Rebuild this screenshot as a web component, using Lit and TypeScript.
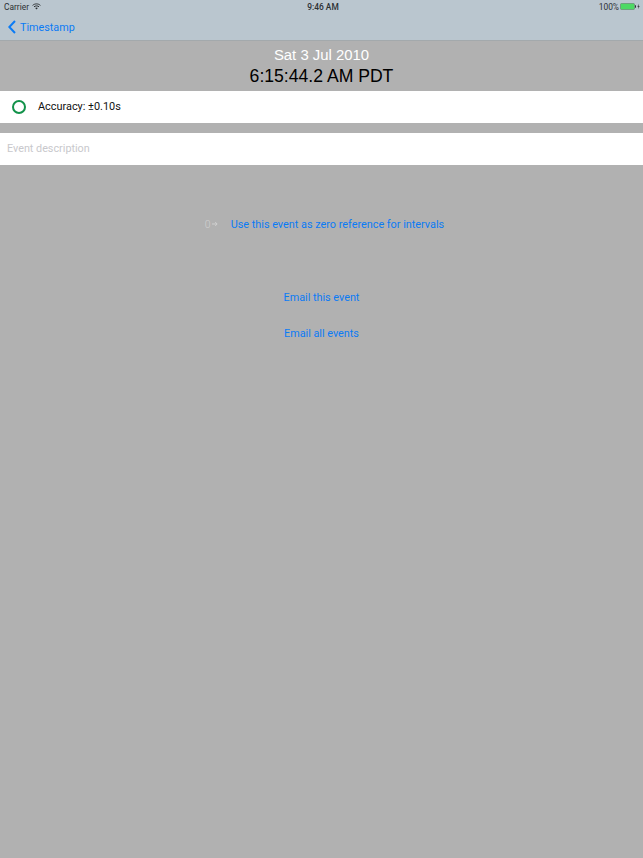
import { LitElement, html, css } from "lit";
import { customElement } from "lit/decorators.js";

@customElement("app-root")
export class AppRoot extends LitElement {
  static styles = css`
    :host { display: block; width: 643px; height: 858px; background: #b1b1b1; font-family: "Roboto", "Liberation Sans", sans-serif; overflow: hidden; }
    .top { height: 40px; background: #bac6cf; border-bottom: 1px solid #a3a9ac; display: flex; flex-direction: column; }
    .status { height: 13px; display: grid; grid-template-columns: 1fr auto 1fr; align-items: center; font-size: 8.4px; color: #2c3033; padding: 0 3px 0 4px; }
    .status .l { display: flex; align-items: center; gap: 3px; }
    .status .r { display: flex; align-items: center; justify-content: flex-end; gap: 1px; }
    .status .c { font-weight: 500; padding-left: 2px; }
    .nav { flex: 1; display: flex; align-items: center; gap: 4px; padding: 1px 0 0 8px; color: #0b7bf5; font-size: 10.8px; }
    .stamp { height: 50px; display: flex; flex-direction: column; align-items: center; padding-top: 4.5px; box-sizing: border-box; font-family: "Liberation Sans", sans-serif; }
    .date { color: #fff; font-size: 14.9px; line-height: 18px; }
    .time { color: #000; font-size: 17.6px; line-height: 24px; }
    .acc { height: 32px; background: #fff; display: flex; align-items: center; gap: 12px; padding: 0 12px 1px; font-size: 10.9px; color: #111; box-sizing: border-box; }
    .ring { width: 14px; height: 14px; border: 2.6px solid #12924a; border-radius: 50%; box-sizing: border-box; }
    .desc { margin-top: 10px; height: 32px; background: #fff; display: flex; align-items: center; padding: 0 7px 2px; font-size: 10.8px; color: #c8c8cc; box-sizing: border-box; }
    .zero { margin-top: 50px; height: 18px; display: flex; justify-content: center; align-items: center; gap: 13px; color: #0b7bf5; font-size: 10.85px; padding-left: 6px; }
    .zero .g { color: #d0d0d0; font-size: 10.5px; font-weight: 300; display: flex; align-items: center; gap: 1px; }
    .link { display: flex; justify-content: center; align-items: center; height: 18px; color: #0b7bf5; font-size: 10.8px; }
    .l1 { margin-top: 55px; }
    .l2 { margin-top: 18px; }
  `;
  render() {
    return html`
      <div class="top">
        <div class="status">
          <div class="l">Carrier
            <svg width="9" height="7" viewBox="0 0 9 7"><path d="M.6 2.4C2.8.4 6.2.4 8.4 2.4M2 3.8C3.4 2.6 5.6 2.6 7 3.8" fill="none" stroke="#2c3033" stroke-width="1"/><path d="M3.2 5 4.5 6.6 5.8 5C5 4.3 4 4.3 3.2 5Z" fill="#2c3033"/></svg>
          </div>
          <div class="c">9:46 AM</div>
          <div class="r">100%
            <svg width="20" height="7" viewBox="0 0 20 7"><rect x="0.5" y="0.5" width="14" height="6" rx="1" fill="#4cd964" stroke="#5f7f6a" stroke-width=".6"/><rect x="15" y="2.3" width="1" height="2.4" fill="#2c3033"/><path d="M18.8 0.8 17.4 3.8H18.5L18 6.2 19.6 3H18.5Z" fill="#2c3033"/></svg>
          </div>
        </div>
        <div class="nav">
          <svg width="8" height="14" viewBox="0 0 8 14"><path d="M7 1 1.3 7 7 13" fill="none" stroke="#0b7bf5" stroke-width="2"/></svg>
          <span>Timestamp</span>
        </div>
      </div>
      <div class="stamp">
        <div class="date">Sat 3 Jul 2010</div>
        <div class="time">6:15:44.2 AM PDT</div>
      </div>
      <div class="acc"><div class="ring"></div><span>Accuracy: ±0.10s</span></div>
      <div class="desc">Event description</div>
      <div class="zero"><span class="g">0<svg width="6" height="6" viewBox="0 0 6 6"><path d="M0 3H5M3.2 1.2 5.2 3 3.2 4.8" fill="none" stroke="#d0d0d0" stroke-width="1"/></svg></span><span>Use this event as zero reference for intervals</span></div>
      <div class="link l1">Email this event</div>
      <div class="link l2">Email all events</div>
    `;
  }
}
